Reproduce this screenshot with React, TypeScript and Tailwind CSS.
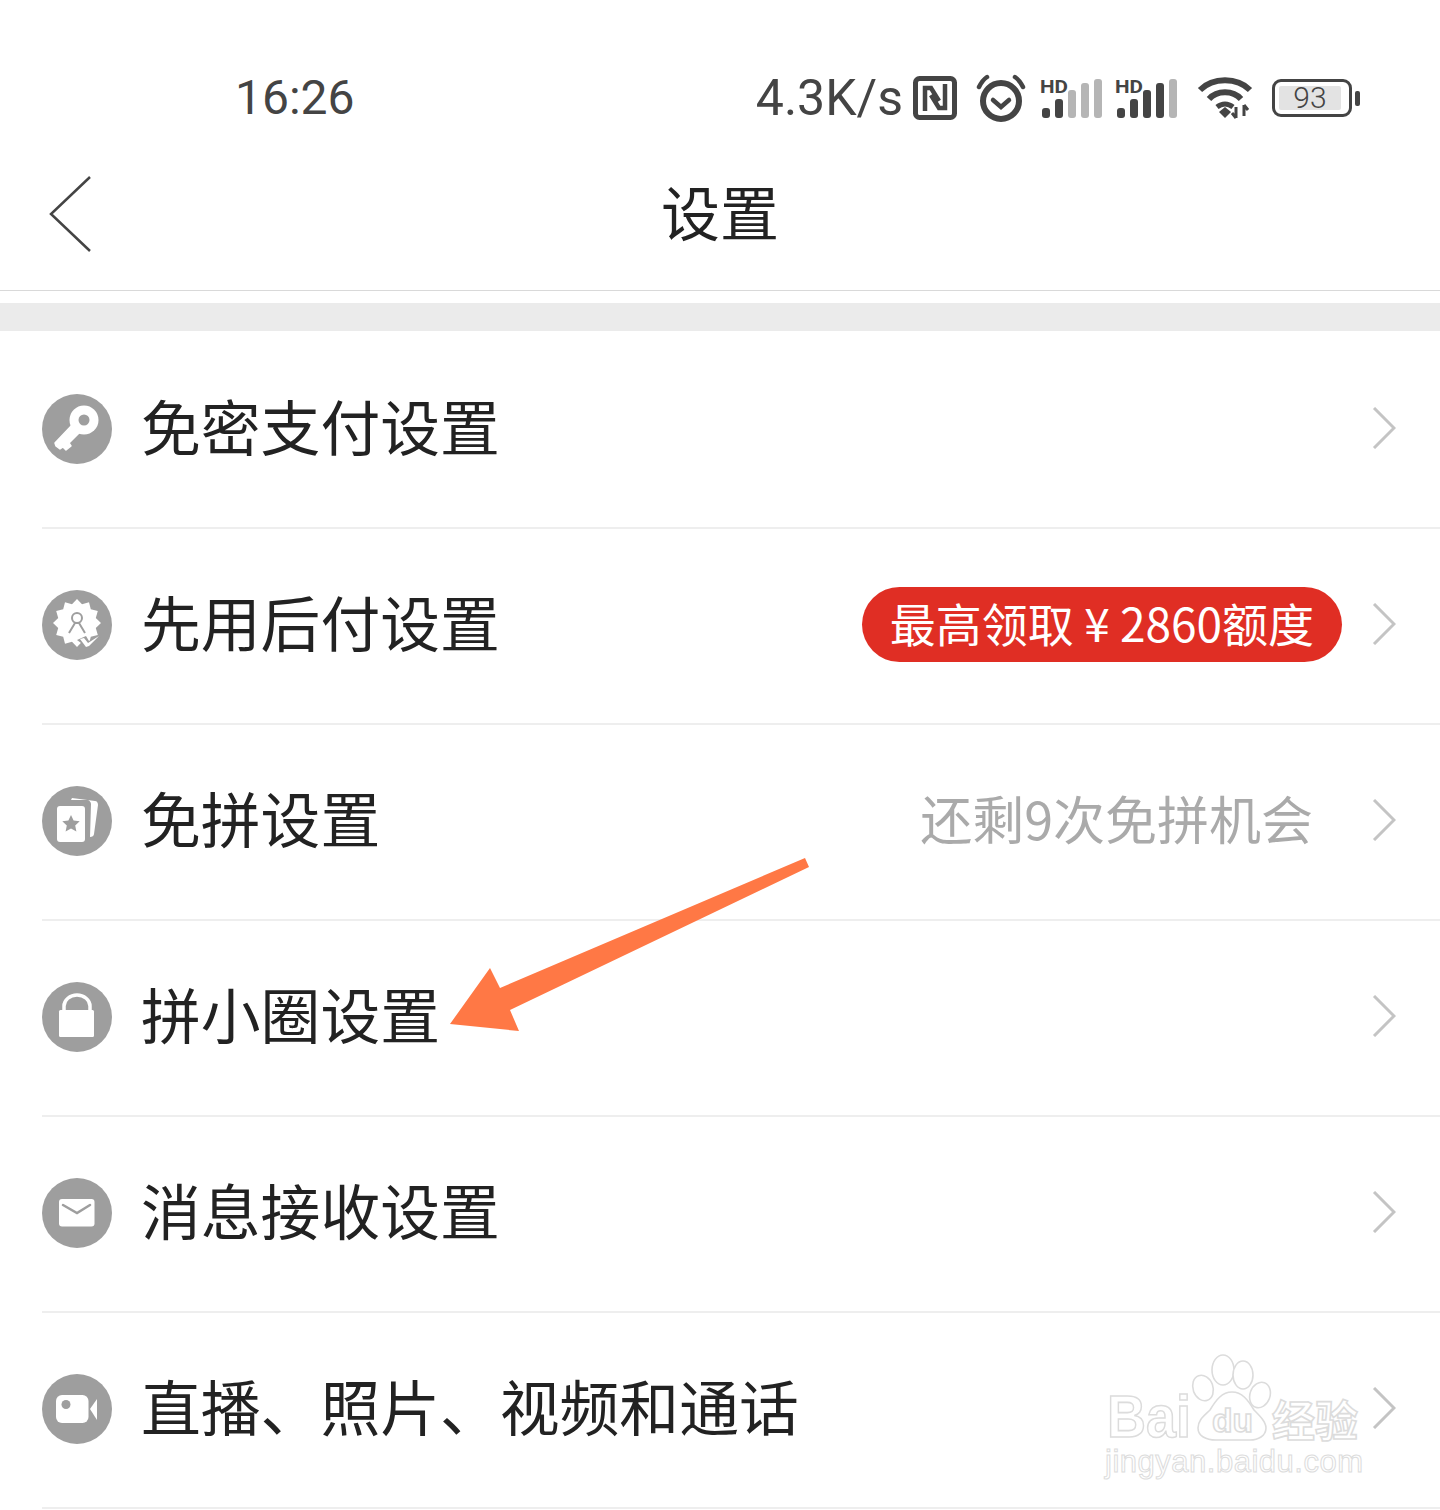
import { ReactNode } from 'react';

const FONT = "font-['Noto_Sans_CJK_SC','Noto_Sans',sans-serif]";

/* ── Status bar icons ─────────────────────────── */

function NfcIcon() {
  return (
    <svg width="44" height="44" viewBox="0 0 44 44" fill="none" stroke="#444" strokeWidth="5">
      <rect x="2.5" y="2.5" width="39" height="39" rx="4" />
      <path d="M12 35V12h6l8 13" strokeWidth="4.5" />
      <path d="M32 8v24h-6l-8-13" strokeWidth="4.5" />
    </svg>
  );
}

function AlarmIcon() {
  return (
    <svg width="50" height="48" viewBox="0 0 50 48" fill="none" stroke="#444" strokeLinecap="round">
      <circle cx="25" cy="27" r="18" strokeWidth="6" />
      <path d="M17 26l8 7 8-7" strokeWidth="4.5" />
      <path d="M3 13C5 9 8 5 11 3" strokeWidth="4.5" />
      <path d="M47 13C45 9 42 5 39 3" strokeWidth="4.5" />
    </svg>
  );
}

function SignalIcon({ active }: { active: number }) {
  const bars = [
    { x: 2, h: 10 },
    { x: 15, h: 19 },
    { x: 28, h: 28 },
    { x: 41, h: 35 },
    { x: 54, h: 39 },
  ];
  return (
    <svg width="63" height="44" viewBox="0 0 63 44">
      <text x="0" y="17" fontFamily="Roboto, sans-serif" fontWeight="700" fontSize="18" textLength="28" lengthAdjust="spacingAndGlyphs" fill="#444">
        HD
      </text>
      {bars.map((b, i) => (
        <rect
          key={b.x}
          x={b.x}
          y={42 - b.h}
          width="8"
          height={b.h}
          rx="3"
          fill={i < active ? '#444' : '#b5b5b5'}
        />
      ))}
    </svg>
  );
}

function WifiIcon() {
  return (
    <svg width="56" height="44" viewBox="0 0 56 44" fill="none" stroke="#444" strokeWidth="6">
      <path d="M3 14C16 1 40 1 53 14" />
      <path d="M12 23C20 14 36 14 44 23" />
      <path d="M20 31c5-4 11-4 16 0" strokeWidth="5" />
      <path d="M22 36l6-5 6 5-6 6z" fill="#444" stroke="none" />
      <path d="M39 31v11M35 37l4 5M47 29v11M47 29l4 5" strokeWidth="3" />
    </svg>
  );
}

function BatteryIcon() {
  return (
    <div className="flex items-center gap-[3px]">
      <div className="w-[80px] h-[38px] rounded-[9px] border-[3px] border-[#444] p-[4px] flex">
        <div className="w-[62px] h-full rounded-[2px] bg-[#e3e3e3] flex items-center justify-center text-[30px] leading-none text-[#444] font-['Roboto',sans-serif] font-light">
          93
        </div>
      </div>
      <div className="w-[5px] h-[15px] rounded-[2px] bg-[#444]" />
    </div>
  );
}

/* ── Row icons, each on a 70px grey disc ──────── */

function Disc({ children }: { children: ReactNode }) {
  return (
    <svg width="70" height="70" viewBox="0 0 70 70" className="shrink-0">
      <circle cx="35" cy="35" r="35" fill="#9e9e9e" />
      {children}
    </svg>
  );
}

const burst = Array.from({ length: 24 }, (_, i) => {
  const r = i % 2 === 0 ? 24 : 19.5;
  const a = (i * Math.PI) / 12;
  return `${(35 + r * Math.sin(a)).toFixed(1)},${(33 - r * Math.cos(a)).toFixed(1)}`;
}).join(' ');

const ICONS: Record<string, ReactNode> = {
  key: (
    <Disc>
      <circle cx="42" cy="26" r="14.5" fill="#fff" />
      <circle cx="42" cy="26" r="5.5" fill="#9e9e9e" />
      <path d="M31 30l7 8-11 11 2 3-5 4-3-3-3 2-4-3-1-3z" fill="#fff" strokeLinejoin="round" stroke="#fff" strokeWidth="1.5" />
    </Disc>
  ),
  badge: (
    <Disc>
      <polygon points={burst} fill="#fff" />
      <circle cx="35" cy="28" r="5" fill="none" stroke="#9e9e9e" strokeWidth="2" />
      <path d="M27 43l6-10h4l6 10" fill="none" stroke="#9e9e9e" strokeWidth="2" />
      <path d="M35 50l9-4 3 5 9-5 3 1-12 10-4-1z" fill="#9e9e9e" />
      <path d="M38 49l4-1 4 5 11-7-10 10-3 1z" fill="#fff" />
    </Disc>
  ),
  cards: (
    <Disc>
      <path d="M30 12l23 3c2 0 3 2 3 4l-4 29c0 2-2 3-4 3l1-33c0-2-2-4-4-4H29z" fill="#fff" />
      <rect x="15" y="20" width="28" height="36" rx="3" fill="#fff" />
      <path d="M29 29l2.6 5.6 6.1.7-4.5 4.2 1.2 6-5.4-3-5.4 3 1.2-6-4.5-4.2 6.1-.7z" fill="#9e9e9e" />
    </Disc>
  ),
  lock: (
    <Disc>
      <path d="M22 30v-6c0-6 6-11 13-11s13 5 13 11v6" fill="none" stroke="#fff" strokeWidth="3.5" />
      <rect x="17" y="28" width="35" height="27" rx="1.5" fill="#fff" />
    </Disc>
  ),
  mail: (
    <Disc>
      <rect x="17" y="21" width="35.5" height="27.5" rx="3" fill="#fff" />
      <path d="M21 27l14 8 13-8" fill="none" stroke="#9e9e9e" strokeWidth="2.5" strokeLinecap="round" />
    </Disc>
  ),
  video: (
    <Disc>
      <rect x="14" y="21" width="32.5" height="28" rx="6" fill="#fff" />
      <circle cx="24" cy="30.5" r="4.5" fill="#9e9e9e" />
      <path d="M48 35l7-10v21z" fill="#fff" />
    </Disc>
  ),
};

function Chevron() {
  return (
    <svg width="24" height="42" viewBox="0 0 24 42" fill="none" stroke="#c4c4c4" strokeWidth="3" className="shrink-0">
      <path d="M2 1l20 20L2 41" />
    </svg>
  );
}

const ROWS: { icon: string; label: string; right?: ReactNode }[] = [
  { icon: 'key', label: '免密支付设置' },
  {
    icon: 'badge',
    label: '先用后付设置',
    right: (
      <span className="h-[75px] w-[480px] mr-[30px] pb-[5px] rounded-full bg-[#e02e24] text-white text-[46px] leading-none flex items-center justify-center">
        最高领取 ¥ 2860额度
      </span>
    ),
  },
  {
    icon: 'cards',
    label: '免拼设置',
    right: <span className="mr-[59px] mt-[-4px] text-[52px] leading-none text-[#aaaaaa]">还剩9次免拼机会</span>,
  },
  { icon: 'lock', label: '拼小圈设置' },
  { icon: 'mail', label: '消息接收设置' },
  { icon: 'video', label: '直播、照片、视频和通话' },
];

function Row({ icon, label, right }: { icon: string; label: string; right?: ReactNode }) {
  return (
    <div className="ml-[42px] h-[196px] pb-[2px] border-b-2 border-[#eeeeee] flex items-center pr-[44px]">
      {ICONS[icon]}
      <span className="ml-[29px] mt-[-7px] text-[59.8px] leading-none text-[#222222]">{label}</span>
      <div className="ml-auto mt-[-2px] flex items-center">
        {right}
        <Chevron />
      </div>
    </div>
  );
}

/* ── Overlays ─────────────────────────────────── */

function Arrow() {
  return (
    <svg width="1440" height="1510" viewBox="0 0 1440 1510" className="absolute left-0 top-0 pointer-events-none">
      <polygon points="450,1024 490,968 500,988 805,858 809,867 510,1010 519,1031" fill="#ff7845" />
    </svg>
  );
}

function Watermark() {
  const hollow = { fill: '#fff', stroke: '#dcdcdc', strokeWidth: 1.6 };
  return (
    <svg width="270" height="135" viewBox="0 0 270 135" className="absolute left-[1100px] top-[1350px] pointer-events-none">
      <text x="7" y="87" fontFamily="Liberation Sans, sans-serif" fontWeight="700" fontSize="60" textLength="84" lengthAdjust="spacingAndGlyphs" {...hollow}>
        Bai
      </text>
      <ellipse cx="123" cy="20" rx="11" ry="15" {...hollow} />
      <ellipse cx="143" cy="25" rx="10" ry="14" {...hollow} />
      <ellipse cx="103" cy="38" rx="10" ry="13" transform="rotate(-20 103 38)" {...hollow} />
      <ellipse cx="160" cy="45" rx="10" ry="13" transform="rotate(20 160 45)" {...hollow} />
      <path d="M132 42c10 0 16 8 22 18 6 6 12 12 12 18 0 8-8 12-16 12H116c-10 0-18-4-18-12 0-8 6-12 12-18 6-10 12-18 22-18z" {...hollow} />
      <text x="112" y="82" fontFamily="Liberation Sans, sans-serif" fontWeight="700" fontSize="34" textLength="41" lengthAdjust="spacingAndGlyphs" {...hollow}>
        du
      </text>
      <text x="172" y="87" fontFamily="Noto Sans CJK SC, sans-serif" fontWeight="700" fontSize="43" {...hollow}>
        经验
      </text>
      <text x="5" y="122" fontFamily="Liberation Sans, sans-serif" fontSize="31" textLength="258" stroke="#dcdcdc" strokeWidth="1" fill="#fff">
        jingyan.baidu.com
      </text>
    </svg>
  );
}

export default function App() {
  return (
    <div className={`relative w-[1440px] h-[1510px] overflow-hidden bg-white ${FONT}`}>
      {/* ── Status bar ──────────────────────────── */}
      <div className="h-[150px] pt-[46px] pl-[235px] pr-[80px] flex items-center justify-between text-[#444444]">
        <span className="text-[48px] leading-none font-['Roboto',sans-serif]">16:26</span>
        <div className="flex items-center">
          <span className="text-[50px] leading-none font-['Roboto',sans-serif] mr-[10px]">4.3K/s</span>
          <NfcIcon />
          <div className="ml-[19px]"><AlarmIcon /></div>
          <div className="ml-[14px]"><SignalIcon active={2} /></div>
          <div className="ml-[12px]"><SignalIcon active={4} /></div>
          <div className="ml-[19px]"><WifiIcon /></div>
          <div className="ml-[19px]"><BatteryIcon /></div>
        </div>
      </div>

      {/* ── Header ──────────────────────────────── */}
      <div className="relative h-[141px] border-b border-[#d9d9d9] flex items-center justify-center">
        <svg width="44" height="78" viewBox="0 0 44 78" fill="none" stroke="#444" strokeWidth="2.5" className="absolute left-[48px] top-[25px]">
          <path d="M42 2L3 39l39 37" />
        </svg>
        <span className="text-[59px] leading-none text-[#222222] mt-[-19px]">设置</span>
      </div>

      <div className="mt-[12px] mb-[2px] h-[28px] bg-[#ebebeb]" />

      {ROWS.map((r) => (
        <Row key={r.icon} {...r} />
      ))}

      <Arrow />
      <Watermark />
    </div>
  );
}
